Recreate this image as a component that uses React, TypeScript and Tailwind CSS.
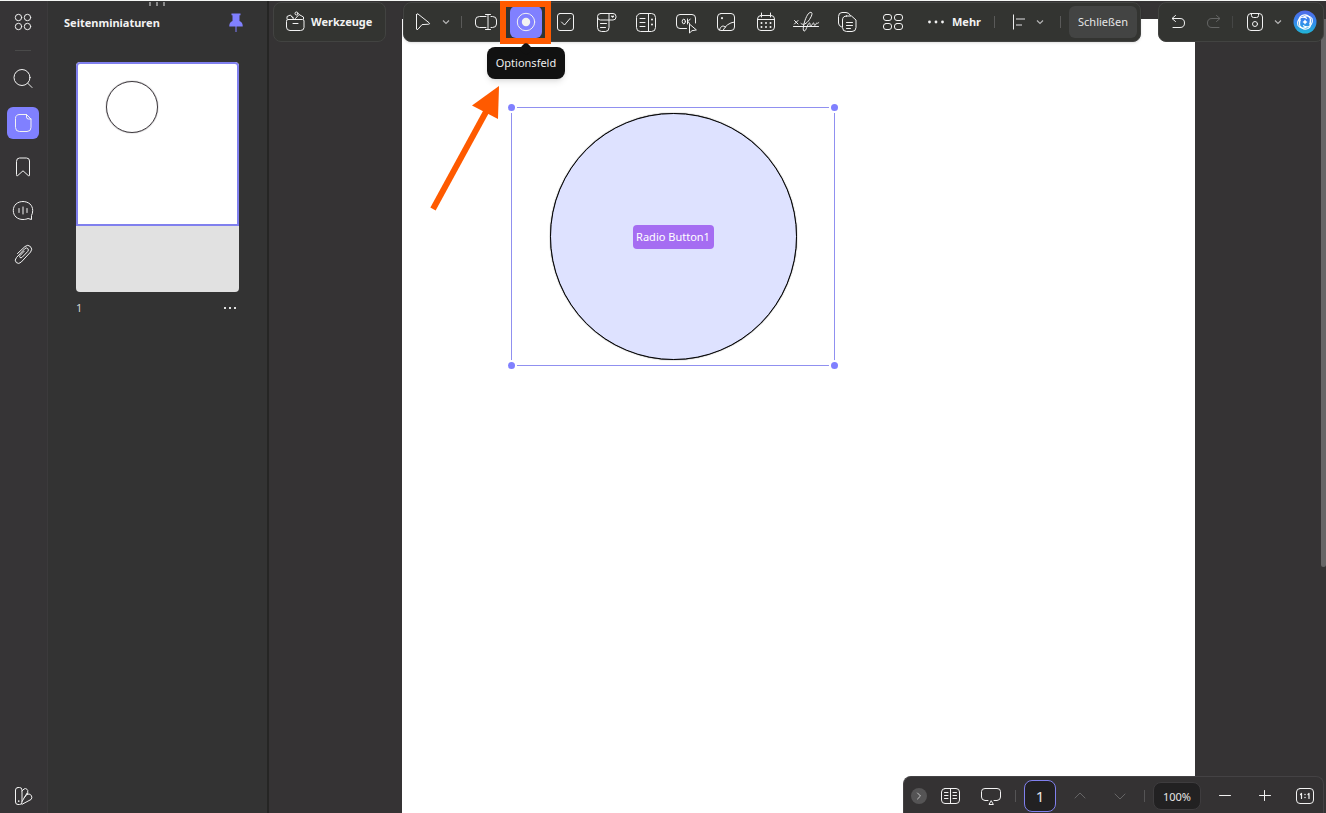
import React from "react";

type IconProps = { children: React.ReactNode; size?: string; box?: string };

function Icon({ children, size = "size-6", box = "0 0 24 24" }: IconProps) {
  return (
    <svg
      aria-hidden="true"
      viewBox={box}
      className={`${size} shrink-0 overflow-visible`}
      fill="none"
      stroke="currentColor"
      strokeWidth="1"
      strokeLinecap="round"
      strokeLinejoin="round"
    >
      {children}
    </svg>
  );
}

type ButtonProps = { label: string; className?: string; children: React.ReactNode };

function IconButton({ label, className = "", children }: ButtonProps) {
  return (
    <button
      type="button"
      aria-label={label}
      className={`flex size-8 shrink-0 items-center justify-center rounded-md ${className}`}
    >
      {children}
    </button>
  );
}

function Divider() {
  return <span className="mx-2 h-3 w-px shrink-0 bg-[#5a5a59]" />;
}

function Chevron() {
  return (
    <svg
      aria-hidden="true"
      viewBox="0 0 14 14"
      className="size-3.5"
      fill="none"
      stroke="#b5b5b5"
      strokeWidth="1.2"
    >
      <path d="M4 5.5 7 8.5 10 5.5" />
    </svg>
  );
}

function Rail() {
  return (
    <nav className="flex w-12 shrink-0 flex-col border-r border-[#3c3a3c] bg-[#363436] pt-[5px] pb-px pl-[7px]">
      <IconButton label="Start">
        <Icon>
          <circle cx="7.5" cy="7.5" r="3.2" />
          <circle cx="16.5" cy="7.5" r="3.2" />
          <circle cx="7.5" cy="16.5" r="3.2" />
          <circle cx="16.5" cy="16.5" r="3.2" />
        </Icon>
      </IconButton>
      <span className="mt-3 ml-2 h-px w-4 bg-[#4a4a4a]" />
      <div className="mt-3 flex flex-col gap-3">
        <IconButton label="Suchen">
          <Icon>
            <circle cx="11" cy="10.5" r="8" />
            <path d="M16.8 16.3 21 20.5" />
          </Icon>
        </IconButton>
        <IconButton label="Seitenminiaturen" className="bg-[#8080ff]">
          <Icon>
            <path d="M8.5 3.5h7l4.500 4.500v8.500q0 4-4 4H8.500q-4 0-4-4v-9q0-4 4-4Z" />
            <path d="M15.500 3.500V6q0 2 2 2H20" />
          </Icon>
        </IconButton>
        <IconButton label="Lesezeichen">
          <Icon>
            <path d="M5.500 6q0-3 3-3h7q3 0 3 3v14q0 1.500-1.200.6L12 15.800l-5.300 4.800q-1.200.9-1.200-.6Z" />
          </Icon>
        </IconButton>
        <IconButton label="Kommentare">
          <Icon>
            <path d="M12 2.500c-5.700 0-9.700 3.600-9.700 9s4 9 9.700 9c2.200 0 3.600-.4 5-1l3.500 1v-4c.8-1.400 1.200-3 1.200-5 0-5.400-4-9-9.700-9Z" />
            <path d="M8 9.500v4M12 8v7M16 9.500v4" />
          </Icon>
        </IconButton>
        <IconButton label="Anlagen">
          <Icon>
            <path d="m6.500 10.500 7.500-7q2.800-2.400 5.400 0 2.600 2.600.2 5.500l-9.300 10q-2.600 2.600-5 .6-2.300-2.400.2-5.100l8.300-8.800q1.600-1.500 3-.2 1.300 1.500-.1 3l-5.500 5.700q-1.200 1.200-2.200.3-.8-1 .2-2.100l4-4.200" />
          </Icon>
        </IconButton>
      </div>
      <IconButton label="Design" className="mt-auto">
        <Icon>
          <path d="M7 3.500h1.500q2.500 0 2.500 2.500v12q0 2.500-2.500 2.500H7Q4.500 20.500 4.500 18V6Q4.500 3.500 7 3.500Z" />
          <path d="m11 7 2-2q1.500-1 3 .3t.5 3L11 17.500M16 10.500l2-.5q1.500 0 2.500 2t-.5 3.500l-9 4.800M13 14l4-5" />
          <path d="M7.700 17v.2" strokeWidth="1.600" />
        </Icon>
      </IconButton>
    </nav>
  );
}

function ThumbnailPanel() {
  return (
    <aside className="relative flex w-[221px] shrink-0 flex-col border-r-2 border-[#252524] bg-[#333333]">
      <div className="absolute top-px left-[101px] flex gap-[5px]">
        <span className="h-1 w-0.5 bg-[#8a8a8a]" />
        <span className="h-1 w-0.5 bg-[#8a8a8a]" />
        <span className="h-1 w-0.5 bg-[#8a8a8a]" />
      </div>
      <header className="flex h-[43px] items-center justify-between pr-[15px] pl-4">
        <h2 className="text-[11px] leading-4 font-bold">Seitenminiaturen</h2>
        <IconButton label="Panel anheften" className="text-[#8080ff]">
          <svg aria-hidden="true" viewBox="0 0 16 20" className="h-5 w-4" fill="currentColor">
            <path d="M3.500.500h9v1.800h-1v5.700q3 1.300 3.200 4.500v1H8.500V19h-1v-5.500H1.300v-1Q1.500 9.300 4.500 8V2.300h-1Z" />
          </svg>
        </IconButton>
      </header>
      <div className="mr-[28px] ml-[28px] flex flex-col pt-[18px]">
        <button
          type="button"
          aria-label="Seite 1"
          className="flex h-[230px] w-full flex-col overflow-hidden rounded-sm bg-[#e1e1e1]"
        >
          <span className="flex h-[164px] w-full rounded-t-sm border-2 border-[#8080ee] bg-white pt-[17px] pl-[28px]">
            <span className="size-[52px] rounded-full border border-[#3d383d] shadow-[0_0_1px_#3d383d]" />
          </span>
        </button>
        <div className="flex h-8 items-center justify-between text-[11px] leading-4 text-[#d5d5d5]">
          <span>1</span>
          <button type="button" aria-label="Seitenoptionen" className="flex h-4 items-center gap-0.5 pr-[3px]">
            <span className="size-0.5 bg-[#e0e0e0]" />
            <span className="mx-px size-0.5 bg-[#e0e0e0]" />
            <span className="size-0.5 bg-[#e0e0e0]" />
          </button>
        </div>
      </div>
    </aside>
  );
}

function RadioTool() {
  return (
    <div className="relative">
      <IconButton label="Optionsfeld" className="bg-[#8080ff]">
        <Icon>
          <circle cx="12" cy="12" r="8.700" />
          <circle cx="12" cy="12" r="4.200" fill="currentColor" stroke="none" />
        </Icon>
      </IconButton>
      <span className="pointer-events-none absolute -top-[5px] -left-[10px] h-[43px] w-[51px] border-[6px] border-[#ff5a00]" />
      <div
        role="tooltip"
        className="absolute top-[41px] left-1/2 flex h-8 w-[78px] -translate-x-1/2 items-center justify-center rounded-lg bg-[#111111] text-[11px] leading-4 text-[#eeeeee] shadow-md"
      >
        <span className="absolute -top-[3px] left-1/2 size-2.5 -translate-x-1/2 rotate-45 rounded-sm bg-[#111111]" />
        <span className="relative">Optionsfeld</span>
      </div>
    </div>
  );
}

function FormToolbar() {
  return (
    <div
      role="toolbar"
      aria-label="Formular"
      className="flex h-10 items-center rounded-lg border border-[#424341] bg-[#333431] pr-[3px] pl-[3px] shadow-sm"
    >
      <IconButton label="Auswählen">
        <Icon>
          <path d="M5.500 4.500v14.500q.4 1.400 1.500.2l4-4.600 6.800-.4q1.600-.3.3-1.400L7 4q-1.200-.7-1.500.5Z" />
        </Icon>
      </IconButton>
      <button type="button" aria-label="Auswahloptionen">
        <Chevron />
      </button>
      <Divider />
      <div className="flex gap-2">
        <IconButton label="Textfeld">
          <Icon>
            <path d="M12 6.500H5.500q-4 0-4 3.500v4q0 3.500 4 3.500H12M17 6.500h1.500q4 0 4 3.500v4q0 3.500-4 3.500H17M11.500 4.500h5M14 4.500v15M11.500 19.500h5" />
          </Icon>
        </IconButton>
        <RadioTool />
        <IconButton label="Kontrollkästchen">
          <Icon>
            <rect x="3.500" y="3.500" width="16" height="17" rx="2.500" />
            <path d="m7.500 12 3 3 5.500-6.500" />
          </Icon>
        </IconButton>
        <IconButton label="Kombinationsfeld">
          <Icon>
            <rect x="3.500" y="3.500" width="18.500" height="6.500" rx="3" />
            <path d="M3.500 8v9.500q0 4 4 4h4q3.500 0 3.500-4V3.500M6.500 13.500h6M6.500 17.500h5" />
            <path d="m17.800 6.200.8.8.8-.8" strokeWidth="1.500" />
          </Icon>
        </IconButton>
        <IconButton label="Listenfeld">
          <Icon>
            <rect x="2.500" y="3.500" width="19" height="18" rx="4" />
            <path d="M14.500 3.500v18M6 8.500h5M6 12.500h5M6 16.500h5" />
            <path d="M18 9.500v.1M18 14.500v.1" strokeWidth="2" />
          </Icon>
        </IconButton>
        <IconButton label="Schaltfläche">
          <Icon>
            <path d="M12.500 18.500H6q-3.500 0-3.500-3.500V8Q2.500 4.500 6 4.500h12q3.500 0 3.500 3.500v5" />
            <ellipse cx="9.800" cy="11.500" rx="1.600" ry="2.300" />
            <path d="M13.500 9v5M16.200 9 14 11.500l1.500 2" />
            <path d="M15.500 14.500v8.500l2.500-2.300 4-.7Z" fill="#333431" />
          </Icon>
        </IconButton>
        <IconButton label="Bildfeld">
          <Icon>
            <rect x="3.500" y="3.500" width="17" height="17" rx="3.500" />
            <path d="M5.500 20c1-4 3.600-5.200 6.200-2.800M9 20.500q3.500-7.500 11.500-8.500" />
            <path d="M8 8v.2" strokeWidth="2" />
          </Icon>
        </IconButton>
        <IconButton label="Datumsfeld">
          <Icon>
            <rect x="3.500" y="5.500" width="17" height="15" rx="3.500" />
            <path d="M3.500 9.500h17M7.500 3v4M16.500 3v4" />
            <path d="M7.500 13v.1M12 13v.1M16.500 13v.1M7.500 17v.1M12 17v.1M16.500 17v.1" strokeWidth="2" />
          </Icon>
        </IconButton>
        <IconButton label="Signaturfeld">
          <Icon>
            <path d="m.5 10.500 3.500 3.500M4 10.500.500 14M-.500 16.500h25" />
            <path d="M7 13.500c2 2 5.500.5 8.500-4s3-6.900 1.500-7.200c-2.500-.3-5 4.700-6.500 9.700-1.200 4-2 9-.2 9 2 0 3-7 5-8 1.500-.5.2 3 1.200 3 1.500 0 2-3 3-3s.3 2.500 1.300 2.500 1.200-2.500 2-2.500.3 1 2-.5" />
          </Icon>
        </IconButton>
        <IconButton label="Felder duplizieren" className="ml-[2px]">
          <Icon>
            <path d="M5.500 17Q2.500 16 2.500 13V6.500Q2.500 2.500 6 2.500h4q3 0 4.500 3" />
            <path d="M10.500 6h5L20 10v7.500q0 4-4 4h-5.500q-4 0-4-4V10q0-4 4-4Z" />
            <path d="M10.500 12.500h6M10.500 15.500h6M10.500 18.500h4" />
          </Icon>
        </IconButton>
        <IconButton label="Weitere Felder" className="ml-[5px]">
          <Icon>
            <rect x="2.500" y="4.500" width="8" height="6" rx="2.500" />
            <rect x="13.500" y="4.500" width="8" height="6" rx="2.500" />
            <rect x="2.500" y="13.500" width="8" height="6" rx="2.500" />
            <rect x="13.500" y="13.500" width="8" height="6" rx="2.500" />
          </Icon>
        </IconButton>
      </div>
      <button
        type="button"
        className="ml-3 flex h-8 w-[65px] items-center gap-2 pl-[7px] text-[11px] leading-4 font-bold"
      >
        <svg aria-hidden="true" viewBox="0 0 16 4" className="h-1 w-4" fill="currentColor">
          <circle cx="1.500" cy="2" r="1.400" />
          <circle cx="8" cy="2" r="1.400" />
          <circle cx="14.500" cy="2" r="1.400" />
        </svg>
        Mehr
      </button>
      <Divider />
      <div className="flex items-center pl-2">
        <button type="button" aria-label="Ausrichten">
          <svg aria-hidden="true" viewBox="0 0 22 20" className="h-5 w-[22px]" fill="none">
            <path d="M2.500 2.500v15" stroke="#eeeeee" />
            <path d="M5 7h9M5 13h6" stroke="#8a8a8a" strokeWidth="2" />
          </svg>
        </button>
        <button type="button" aria-label="Ausrichtungsoptionen">
          <Chevron />
        </button>
      </div>
      <span className="mx-2 ml-auto h-3 w-px bg-[#5a5a59]" />
      <button type="button" className="h-8 w-[68px] rounded-md bg-[#434443] text-[11px] leading-4 text-[#e6e6e6]">
        Schließen
      </button>
    </div>
  );
}

function HistoryBar() {
  return (
    <div className="flex h-10 items-center rounded-lg border border-[#424341] bg-[#333431] pr-[2px] pl-[3px]">
      <IconButton label="Rückgängig">
        <Icon>
          <path d="M9.500 5.500 6 8.500l3.500 3M6.500 8.500h7.500q4.500 0 4.500 4.500t-4.500 4.500H7" />
        </Icon>
      </IconButton>
      <IconButton label="Wiederherstellen" className="ml-1 text-[#646564]">
        <Icon>
          <path d="m14.500 5.500 3.500 3-3.500 3M17.500 8.500H10q-4.500 0-4.500 4.500t4.500 4.500h7" />
        </Icon>
      </IconButton>
      <span className="mr-1.5 ml-0.5 h-3 w-px bg-[#454645]" />
      <IconButton label="Speichern">
        <Icon>
          <rect x="4.500" y="3.500" width="15" height="17" rx="3.500" />
          <path d="M8.500 3.500v2q0 2 2 2h3q2 0 2-2v-2" />
          <circle cx="12" cy="14" r="2.500" />
        </Icon>
      </IconButton>
      <button type="button" aria-label="Speicheroptionen">
        <Chevron />
      </button>
      <IconButton label="KI-Assistent" className="ml-auto">
        <svg aria-hidden="true" viewBox="0 0 24 24" className="size-6" fill="none" stroke="#ffffff" strokeWidth="1.100">
          <defs>
            <linearGradient id="assistant" x1="0" y1="0" x2="0" y2="1">
              <stop offset="0" stopColor="#5268e8" />
              <stop offset="0.500" stopColor="#3489ed" />
              <stop offset="1" stopColor="#21b5d5" />
            </linearGradient>
          </defs>
          <circle cx="12" cy="12" r="11.500" fill="url(#assistant)" stroke="none" />
          <path d="M7 13.500Q4.500 8 9 5.500q5-2 8 2.500 1.500 3-.5 6.500" />
          <path d="M10.500 7Q16 4.500 19 8.500q1.500 5-3 8-3 1-6-1" />
          <path d="M17 10.500q2.500 5.500-2 8-5 2-8-2.500-1.500-3 .5-6.500" />
          <path d="M13.500 17Q8 19.500 5 15.500q-1.500-5 3-8 3-1 6 1" />
          <path d="M12 9.500 13 11 14.500 12 13 13 12 14.500 11 13 9.500 12 11 11Z" fill="#ffffff" stroke="none" />
        </svg>
      </IconButton>
    </div>
  );
}

function TopBars() {
  return (
    <div className="absolute inset-x-0 top-0 grid grid-cols-[113px_738px_166px] justify-between pt-px pr-[2px] pl-1">
      <button
        type="button"
        className="flex h-10 items-center gap-1 rounded-lg border border-[#424341] bg-[#333431] pl-[9px] text-[11px] leading-4 font-bold"
      >
        <Icon>
          <path d="M3.500 11q0-1.500 1.500-1.500h14.500q1.500 0 1.500 1.500v6.500q0 3-3.500 3h-10.500q-3.500 0-3.500-3Z" />
          <path d="M10 13.500h5M4 9V6.500L7.500 5l3 4M12.500 8.500l3.500-4 4.500 2.500v2M9 6.500l1.500 1.500" />
          <circle cx="13.500" cy="3.500" r="1.500" />
        </Icon>
        <span>Werkzeuge</span>
      </button>
      <FormToolbar />
      <HistoryBar />
    </div>
  );
}

function RadioField() {
  return (
    <div className="absolute top-[88px] left-[109px] h-[259px] w-[324px] border border-[#9090f0]">
      <span className="absolute -top-[4px] -left-[4px] size-[7px] rounded-full bg-[#8080ff] ring-2 ring-white" />
      <span className="absolute -top-[4px] -right-[4px] size-[7px] rounded-full bg-[#8080ff] ring-2 ring-white" />
      <span className="absolute -bottom-[4px] -left-[4px] size-[7px] rounded-full bg-[#8080ff] ring-2 ring-white" />
      <span className="absolute -right-[4px] -bottom-[4px] size-[7px] rounded-full bg-[#8080ff] ring-2 ring-white" />
      <label className="flex size-full items-center justify-center">
        <input
          type="radio"
          className="size-[247px] appearance-none rounded-full border border-black bg-[#dee2ff] shadow-[0_0_1px_#000000]"
        />
        <span className="absolute flex h-6 w-[81px] items-center justify-center rounded bg-[#a56df2] text-[11px] leading-4 text-white">
          Radio Button1
        </span>
      </label>
    </div>
  );
}

function ViewBar() {
  return (
    <div
      role="toolbar"
      aria-label="Ansicht"
      className="absolute right-[2px] bottom-0 flex h-[37px] items-center gap-2 rounded-t-lg border border-b-0 border-[#444244] bg-[#343233] pt-[2px] pr-[2px] pl-[7px]"
    >
      <button
        type="button"
        aria-label="Leiste einklappen"
        className="flex size-4 items-center justify-center rounded-full bg-[#555455] text-[#c5c5c5]"
      >
        <Icon size="size-3" box="0 0 12 12">
          <path d="M4.500 3 7.500 6 4.500 9" />
        </Icon>
      </button>
      <IconButton label="Seitenansicht">
        <Icon>
          <rect x="2.500" y="4.500" width="18" height="15" rx="3.500" />
          <path d="M11.500 4.500v15M5.500 8.500H9M5.500 11.500H9M5.500 14.500H9M14 8.500h3.500M14 11.500h3.500M14 14.500h3.500" />
        </Icon>
      </IconButton>
      <IconButton label="Präsentation">
        <Icon>
          <path d="M9 16.500H6q-3.500-.3-3.500-3.500V7.500Q2.500 4.500 6 4.500h12q3.500 0 3.500 3V13q0 3.200-3.500 3.500h-3M12 17l-2 3.500h4Z" />
        </Icon>
      </IconButton>
      <span className="h-3 w-px bg-[#555455]" />
      <input
        aria-label="Seitenzahl"
        defaultValue="1"
        className="size-8 rounded-lg border border-[#8080ee] bg-[#222122] text-center text-[15px] text-[#e6e6e6]"
      />
      <IconButton label="Vorherige Seite" className="text-[#666566]">
        <Icon>
          <path d="m7 14 5-5 5 5" />
        </Icon>
      </IconButton>
      <IconButton label="Nächste Seite" className="text-[#666566]">
        <Icon>
          <path d="m7 10 5 5 5-5" />
        </Icon>
      </IconButton>
      <span className="h-3 w-px bg-[#555455]" />
      <input
        aria-label="Zoomstufe"
        defaultValue="100%"
        className="h-7 w-12 rounded-lg border border-[#3e3c3e] bg-[#222122] text-center text-[11px] text-[#e6e6e6]"
      />
      <IconButton label="Verkleinern">
        <Icon>
          <path d="M6.500 11.500h11" />
        </Icon>
      </IconButton>
      <IconButton label="Vergrößern">
        <Icon>
          <path d="M6.500 11.500h11M11.500 6.500v10" />
        </Icon>
      </IconButton>
      <IconButton label="Originalgröße">
        <Icon>
          <rect x="3.500" y="4.500" width="17" height="15" rx="3.500" />
          <path d="m7.500 10.500 1-1v5M15 10.500l1-1v5" strokeWidth="1.200" />
          <path d="M12 10.500v.1M12 13.500v.1" strokeWidth="1.500" />
        </Icon>
      </IconButton>
    </div>
  );
}

export default function App() {
  return (
    <div className="flex h-screen overflow-hidden border-t border-[#f5f7f5] bg-[#333333] font-['Noto_Sans',sans-serif] text-[#f2f2f2]">
      <Rail />
      <ThumbnailPanel />
      <main className="relative flex min-w-0 flex-1 justify-center bg-[#353334] pt-[18px] pl-[2px]">
        <section aria-label="Seite 1" className="relative w-[793px] bg-white">
          <RadioField />
          <svg aria-hidden="true" viewBox="0 0 70 126" className="absolute top-[66px] left-[28px] h-[126px] w-[70px]">
            <path d="M3 124 57 25" stroke="#ff5a00" strokeWidth="6" />
            <path d="M69 1 42 20.500 68 34Z" fill="#ff5a00" />
          </svg>
        </section>
        <span className="absolute top-[18px] right-0 h-[548px] w-[5px] rounded-b bg-[#666566]" />
        <TopBars />
        <ViewBar />
      </main>
    </div>
  );
}
